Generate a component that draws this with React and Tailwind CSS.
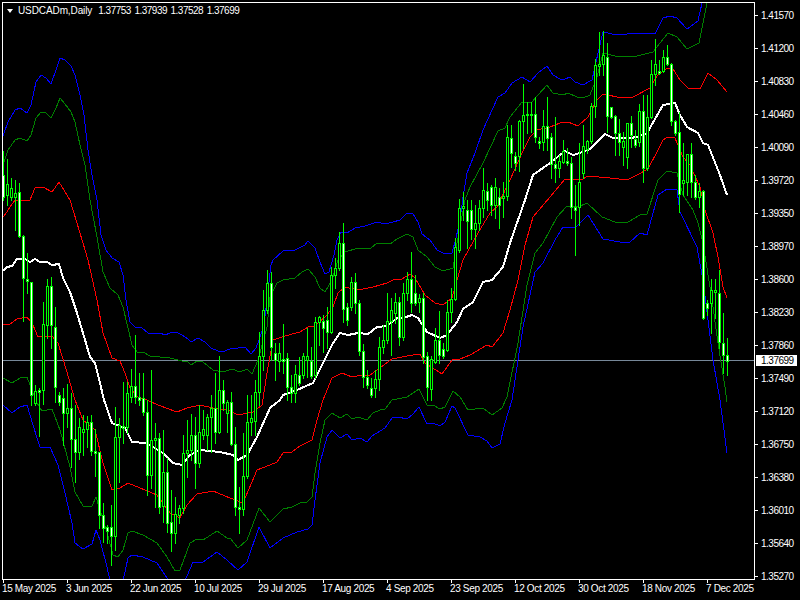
const prices = ["1.41570","1.41200","1.40830","1.40460","1.40090","1.39720","1.39350","1.38970","1.38600","1.38230","1.37860","1.37490","1.37120","1.36750","1.36380","1.36010","1.35640","1.35270"];
const dates = ["15 May 2025","3 Jun 2025","22 Jun 2025","10 Jul 2025","29 Jul 2025","17 Aug 2025","4 Sep 2025","23 Sep 2025","12 Oct 2025","30 Oct 2025","18 Nov 2025","7 Dec 2025"];

// high, body top, body bottom, low, bear (all in chart pixels), one per bar
const candles = [
  [151,175,197,200,1],[159,184,195,205,0],[178,188,197,200,0],[180,193,197,230,0],[183,192,236,237,1],[235,236,278,321,1],
  [253,279,281,293,1],[282,282,395,405,1],[385,391,403,405,0],[388,390,392,436,1],[302,324,390,404,0],[279,286,325,338,0],
  [277,286,325,348,1],[307,327,387,402,1],[392,395,402,405,1],[388,398,413,445,1],[384,408,413,427,0],[393,408,439,467,1],
  [405,439,452,482,1],[418,427,452,459,0],[415,429,432,455,0],[416,422,429,447,0],[415,422,451,455,1],[429,451,453,476,1],
  [452,452,515,528,1],[503,515,528,542,1],[525,527,531,543,1],[505,527,536,565,1],[407,437,536,550,0],[418,425,437,482,0],
  [382,426,428,443,1],[382,393,427,433,0],[369,386,397,402,0],[335,386,397,403,1],[373,397,400,405,1],[373,398,412,415,1],
  [400,412,475,495,1],[370,440,475,488,0],[423,438,440,507,0],[433,438,507,513,1],[430,472,506,522,0],[458,472,523,532,1],
  [490,522,533,551,1],[497,514,533,543,0],[505,508,515,523,0],[435,453,508,513,0],[420,450,453,477,0],[414,435,450,460,0],
  [417,435,463,488,1],[405,432,463,467,0],[410,429,435,439,0],[414,417,435,450,0],[395,408,417,452,0],[373,408,432,443,1],
  [356,390,432,433,0],[380,390,403,410,1],[400,402,413,432,0],[392,402,444,445,1],[427,444,507,515,1],[487,507,509,533,1],
  [433,476,509,515,0],[395,422,476,478,0],[395,418,422,435,0],[380,392,421,435,0],[332,356,392,405,0],[290,310,356,370,0],
  [270,283,310,313,0],[272,283,347,360,1],[343,353,360,380,1],[343,353,361,371,0],[324,359,361,373,1],[353,358,387,400,1],
  [375,387,393,402,1],[365,374,393,402,0],[357,375,383,385,1],[353,356,375,378,0],[328,356,360,377,0],[347,361,376,378,1],
  [317,322,375,378,0],[316,317,322,345,0],[315,321,328,352,1],[307,320,332,348,1],[267,275,332,333,0],[258,268,275,288,0],
  [232,243,268,270,0],[223,243,309,322,1],[303,307,320,325,1],[277,282,307,310,0],[273,282,303,313,1],[300,303,351,355,1],
  [344,351,377,387,1],[370,377,385,388,1],[378,388,395,397,1],[370,379,388,397,0],[337,347,379,390,0],[325,340,347,353,0],
  [293,321,340,343,0],[298,310,321,355,0],[293,302,313,323,0],[297,302,337,345,1],[283,293,337,340,0],[272,279,293,300,0],
  [252,279,303,312,1],[275,293,303,305,1],[294,298,302,312,0],[293,298,357,363,1],[352,356,387,400,1],[356,359,389,400,0],
  [328,340,362,363,0],[311,340,355,363,1],[343,349,356,358,1],[300,312,350,351,0],[288,299,312,322,0],[238,247,299,300,0],
  [199,208,250,252,0],[192,206,208,220,0],[200,210,221,248,1],[200,210,229,239,1],[205,223,229,248,0],[200,208,223,230,0],
  [168,190,208,217,0],[183,191,200,210,1],[185,187,205,215,1],[178,187,205,218,0],[188,197,205,228,1],[182,196,198,217,0],
  [125,137,196,200,0],[125,138,153,167,1],[152,156,163,170,1],[120,121,156,171,0],[84,115,121,148,0],[102,114,115,133,0],
  [102,114,115,132,1],[97,114,137,142,1],[137,141,143,148,1],[110,126,142,150,0],[97,126,138,150,1],[133,137,164,178,1],
  [117,164,168,182,1],[155,161,168,177,0],[140,151,162,163,0],[148,161,163,165,1],[157,163,207,218,1],[185,207,210,255,1],
  [143,182,207,225,0],[125,146,173,178,0],[140,141,149,153,0],[103,106,141,143,0],[59,65,106,117,0],[32,64,66,75,0],
  [31,55,64,75,0],[43,57,116,132,1],[107,107,117,118,1],[115,116,133,155,1],[119,133,142,155,1],[132,141,147,165,0],
  [123,123,157,168,0],[116,123,135,147,1],[130,139,145,147,1],[104,111,142,146,0],[95,111,168,182,1],[95,117,168,170,0],
  [60,74,117,118,0],[39,64,74,85,0],[60,71,73,74,1],[50,57,71,72,0],[45,57,64,65,1],[63,64,121,125,1],
  [120,121,133,135,1],[112,132,194,212,1],[143,180,183,195,0],[165,154,182,195,0],[143,154,182,197,1],[175,182,197,199,1],
  [183,191,197,207,0],[190,191,318,319,1],[300,303,308,315,1],[279,290,303,333,0],[279,290,292,318,0],[270,293,342,348,1],
  [313,343,355,373,1],[338,355,361,375,1],
];

const upperBlue = "3,136 8,122 15,110 20,108 27,113 31,105 36,82 41,75 46,78 51,84 56,70 60,58 65,60 71,66 75,75 80,95 84,115 88,150 92,175 97,200 101,235 106,250 112,258 119,262 123,275 126,300 130,322 135,327 142,328 148,333 155,334 160,333 165,335 170,333 176,332 182,335 188,339 191,342 198,338 205,342 211,348 218,351 225,351 232,348 238,348 245,347 251,354 256,348 259,340 264,325 271,265 273,260 283,251 295,250 305,245 308,241 315,248 320,262 325,274 329,272 334,255 337,240 341,232 347,233 355,228 365,226 377,222 385,224 393,222 400,220 407,213 413,214 418,222 422,234 430,240 437,250 445,254 452,253 456,238 460,220 463,197 467,173 475,153 483,130 498,97 505,93 512,83 522,77 530,82 538,73 547,66 553,75 560,79 565,79 570,77 575,82 583,85 592,80 598,53 603,32 617,35 638,33 655,34 663,18 670,16 677,18 687,29 698,21 702,3";
const upperGreen = "3,165 8,150 15,140 20,138 27,141 31,135 36,118 41,112 46,113 51,118 56,108 60,98 65,104 71,112 75,122 80,145 85,165 90,200 97,237 103,272 110,288 118,295 123,307 128,328 132,345 137,352 143,352 150,356 160,357 170,358 182,361 187,361 191,365 197,361 203,362 213,370 223,372 232,369 240,372 247,369 252,374 258,360 267,327 270,297 277,283 283,280 295,278 302,272 308,269 315,277 320,288 325,292 332,280 338,260 345,252 358,248 370,249 377,243 390,244 397,239 407,234 413,237 418,250 427,257 435,267 443,271 453,268 457,243 465,200 470,187 483,163 498,131 505,128 510,117 522,102 532,102 538,95 547,85 553,93 563,95 568,93 577,97 583,98 590,95 597,77 603,53 615,56 637,56 653,52 660,43 668,33 677,37 687,49 699,43 707,3";
const upperRed = "3,217 7,212 10,207 15,200 20,200 30,200 35,188 43,187 52,192 59,182 70,200 80,233 88,260 97,300 103,333 112,358 120,361 125,373 130,388 138,397 147,400 158,405 177,412 187,408 200,405 213,408 228,410 238,415 253,412 262,405 267,373 273,340 285,336 300,332 308,327 315,326 327,315 333,307 338,293 345,287 358,290 373,287 387,283 395,279 402,279 410,274 415,278 425,295 435,303 443,305 452,298 457,280 463,260 478,233 490,213 497,207 510,180 522,153 530,137 537,130 550,127 560,123 568,122 578,126 588,117 597,100 603,94 622,98 633,97 650,88 657,76 667,68 673,69 680,80 688,88 700,89 708,73 717,80 727,92";
const middle = "3,271 7,267 12,266 17,259 25,259 30,262 35,259 40,262 47,262 52,265 59,264 63,278 70,292 77,313 83,333 90,357 95,363 100,383 104,400 112,423 125,428 132,442 145,443 153,447 163,453 173,463 182,465 190,455 200,450 220,452 233,455 238,460 247,455 257,437 270,408 280,400 283,395 297,390 313,383 323,363 333,343 340,333 348,335 358,333 368,334 377,327 387,326 397,318 403,318 412,315 418,318 427,332 440,338 447,335 457,322 463,309 473,302 483,282 492,280 503,267 510,243 518,220 525,200 533,175 550,163 565,151 573,155 580,153 590,149 605,134 613,138 630,138 637,137 647,133 663,105 675,103 680,115 687,127 698,133 703,143 708,145 720,175 727,195";
const lowerRed = "3,324 10,324 17,319 27,317 33,325 38,337 52,336 58,343 67,372 75,400 83,420 95,430 103,463 112,490 120,488 128,483 140,488 157,495 170,513 180,518 187,505 197,494 213,491 230,498 243,503 257,470 270,465 277,462 283,453 292,452 300,446 312,440 317,420 323,400 332,378 342,373 352,377 362,375 370,375 380,368 392,359 407,356 420,354 425,363 442,374 452,360 460,359 470,355 487,345 492,347 503,333 510,310 518,280 525,245 533,217 550,197 565,179 582,180 587,176 610,178 627,180 637,175 648,169 658,150 663,140 668,137 675,138 683,157 690,165 700,187 705,210 713,233 718,257 723,287 727,298";
const lowerGreen = "3,378 12,383 20,378 27,377 30,385 37,403 42,411 52,409 60,430 70,467 75,492 83,506 92,506 96,497 100,510 107,532 113,555 118,557 123,550 128,533 132,531 143,535 157,543 167,557 175,571 180,570 190,543 197,539 203,540 217,531 227,538 230,538 238,548 247,540 259,508 270,522 283,509 292,507 300,503 307,502 312,497 315,473 320,443 325,420 332,413 340,418 347,414 352,419 358,417 367,420 373,413 380,410 385,409 392,400 407,397 419,389 427,405 433,405 440,409 445,407 453,391 460,397 468,410 483,408 492,415 502,408 507,397 518,343 527,285 535,253 543,243 557,217 567,206 578,207 587,203 602,217 615,222 628,222 640,215 647,214 658,180 667,171 677,173 683,195 693,210 698,223 703,243 712,300 718,343 725,387 727,402";
const lowerBlue = "3,405 12,413 20,407 27,405 30,415 37,438 40,447 50,447 58,465 65,493 72,523 75,543 83,549 92,544 96,530 100,540 107,567 112,590 121,590 128,558 132,555 143,557 157,563 167,578 172,590 181,590 193,562 203,562 217,552 227,560 238,570 247,562 259,527 270,548 283,538 297,532 308,529 312,525 315,500 320,463 327,437 332,430 340,438 347,434 352,440 360,438 367,442 372,436 385,428 392,418 398,417 407,419 413,414 419,407 427,424 433,423 440,426 445,422 452,406 455,408 468,435 480,437 487,441 492,448 500,444 505,423 512,400 523,327 535,272 543,263 555,240 563,227 575,228 588,215 603,239 620,242 630,242 640,233 647,235 658,195 667,189 677,190 680,212 697,247 703,280 713,360 720,400 727,453";

function Candle({ c, i }) {
  const col = 3 + i * 4;
  const [high, top, bottom, low, bear] = c;
  return (
    <g>
      <rect x={col} y={high} width="1" height={low - high + 1} fill="#00ff00" />
      <rect x={col - 1} y={top} width="3" height={bottom - top + 1} fill="#00ff00" />
      {bottom - top > 1 && (
        <rect x={col} y={top + 1} width="1" height={bottom - top - 1} fill={bear ? "#ffffff" : "#000000"} />
      )}
    </g>
  );
}

function Chart() {
  return (
    <svg width="751" height="576" viewBox="3 3 751 576" shapeRendering="crispEdges" fill="none" className="block">
      <line x1="3" y1="360.5" x2="754" y2="360.5" stroke="#778899" />
      <polyline points={upperBlue} stroke="#0000ff" />
      <polyline points={lowerBlue} stroke="#0000ff" />
      <polyline points={upperGreen} stroke="#008000" />
      <polyline points={lowerGreen} stroke="#008000" />
      <polyline points={upperRed} stroke="#ff0000" />
      <polyline points={lowerRed} stroke="#ff0000" />
      <polyline points={middle} stroke="#ffffff" strokeWidth="2" />
      {candles.map((c, i) => <Candle key={i} c={c} i={i} />)}
    </svg>
  );
}

export default function App() {
  return (
    <div className="w-[800px] h-[600px] bg-black text-white overflow-hidden font-['Liberation_Sans',sans-serif] text-[10px] leading-none">
      <div className="flex h-[580px] pt-[2px] pl-[2px]">
        {/* chart frame */}
        <div className="relative w-[753px] h-[578px] border border-white shrink-0">
          <Chart />
          <div className="absolute left-[4px] top-[2px] flex items-center h-[11px]">
            <div className="w-0 h-0 border-x-[3px] border-x-transparent border-t-[4px] border-t-white" />
            <span className="ml-[5px] tracking-[-0.1px]">USDCADm,Daily</span>
            <span className="ml-[6px] tracking-[-0.5px] [word-spacing:1.2px]">1.37753 1.37939 1.37528 1.37699</span>
          </div>
        </div>

        {/* price scale */}
        <div className="relative -mt-[3px] flex-1 tracking-[-0.5px]">
          {prices.map((p) => (
            <div key={p} className="flex items-center h-[33px]">
              <div className="w-[3px] h-px bg-white" />
              <span className="ml-[3px]">{p}</span>
            </div>
          ))}
          <div className="absolute left-[1px] top-[356px] w-[41px] h-[11px] bg-white text-black flex items-center pl-[5px]">1.37699</div>
        </div>
      </div>

      {/* time scale */}
      <div className="flex pl-[3px]">
        {dates.map((d) => (
          <div key={d} className="w-[64px] shrink-0">
            <div className="w-px h-[3px] bg-white" />
            <div className="mt-[1px] -ml-px tracking-[-0.35px] whitespace-nowrap">{d}</div>
          </div>
        ))}
      </div>
    </div>
  );
}
